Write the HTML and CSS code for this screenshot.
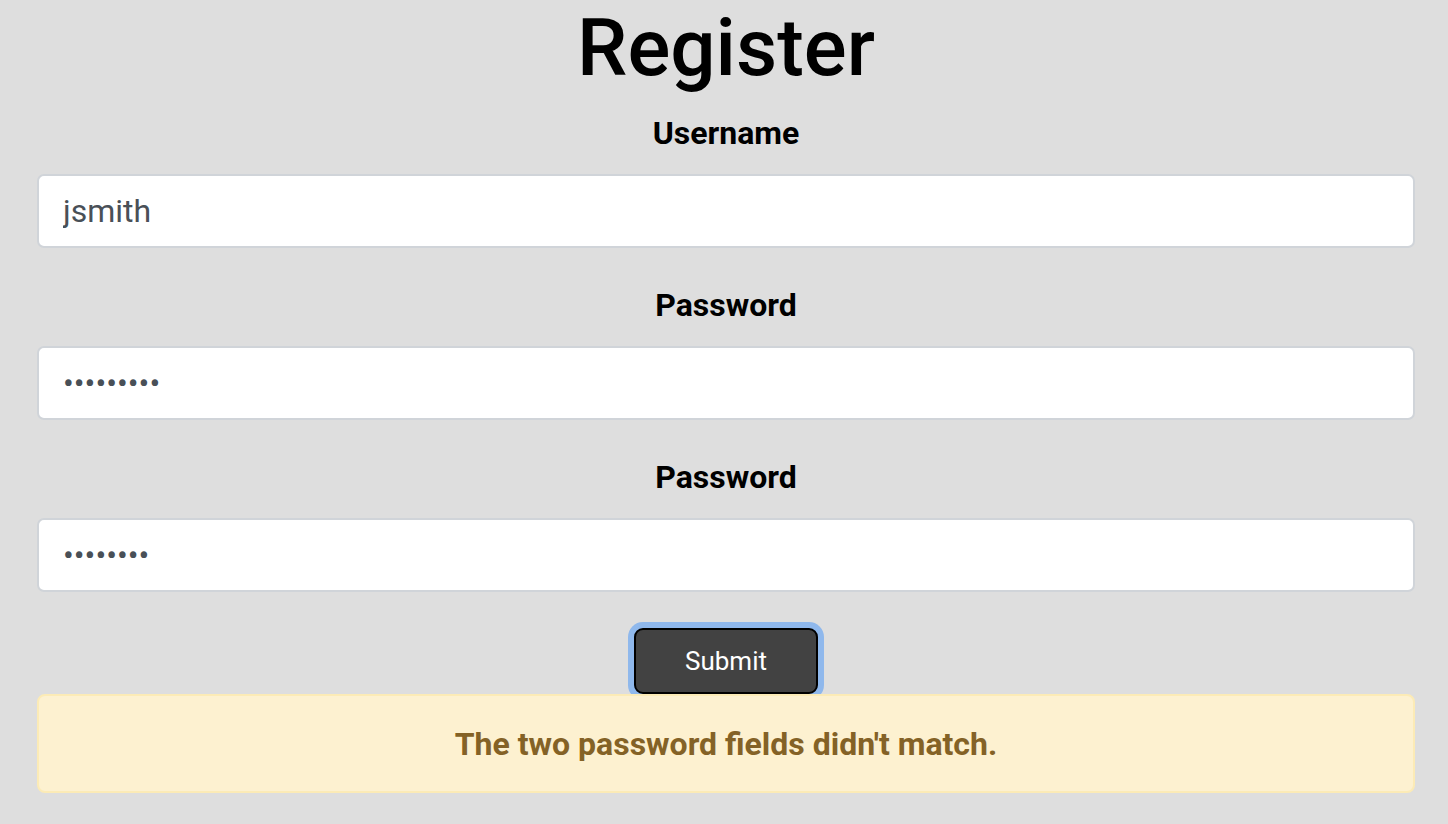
FILE: index.html
```html
<!DOCTYPE html>
<html lang="en">
<head>
<meta charset="utf-8">
<title>Register</title>
<link rel="stylesheet" href="styles.css">
</head>
<body>
<main class="page">
  <h1 class="title">Register</h1>
  <form class="form">
    <div class="field field-first">
      <label class="label" for="username">Username</label>
      <input class="input" id="username" type="text" value="jsmith">
    </div>
    <div class="field">
      <label class="label" for="password1">Password</label>
      <input class="input input-pw" id="password1" type="password" value="123456789">
    </div>
    <div class="field">
      <label class="label" for="password2">Password</label>
      <input class="input input-pw" id="password2" type="password" value="12345678">
    </div>
    <div class="actions">
      <button class="btn" type="button">Submit</button>
    </div>
    <div class="alert">The two password fields didn't match.</div>
  </form>
</main>
</body>
</html>
```

FILE: styles.css
```css
html, body {
  margin: 0;
  padding: 0;
  background: #dedede;
  font-family: Roboto, "Liberation Sans", sans-serif;
  color: #000;
}

.page {
  padding: 0 33px 0 37px;
}

.title {
  margin: 0;
  padding-top: 2px;
  text-align: center;
  font-size: 80px;
  font-weight: 500;
  line-height: 92px;
}

.form {
  display: flex;
  flex-direction: column;
}

.field {
  display: flex;
  flex-direction: column;
}

.label {
  display: block;
  text-align: center;
  font-size: 32px;
  font-weight: 700;
  line-height: 38px;
  margin-top: 38px;
  margin-bottom: 22px;
}

.field-first .label {
  margin-top: 20px;
}

.input {
  box-sizing: border-box;
  width: 100%;
  height: 74px;
  margin: 0;
  padding: 0 24px;
  border: 2px solid #d0d4d9;
  border-radius: 7px;
  background: #fff;
  font-family: Roboto, "Liberation Sans", sans-serif;
  font-size: 32px;
  color: #495057;
  outline: none;
}

.input-pw {
  font-size: 32px;
  letter-spacing: 0;
}

.actions {
  display: flex;
  justify-content: center;
  margin-top: 36px;
}

.btn {
  box-sizing: border-box;
  width: 184px;
  height: 66px;
  background: #424242;
  color: #fff;
  border: 2px solid #000;
  border-radius: 9px;
  font-family: Roboto, "Liberation Sans", sans-serif;
  font-size: 26px;
  box-shadow: 0 0 0 6px #8fb8ec;
  cursor: pointer;
}

.alert {
  box-sizing: border-box;
  height: 99px;
  display: flex;
  align-items: center;
  justify-content: center;
  background: #fdf1d0;
  border: 2px solid #fcebb6;
  border-radius: 8px;
  color: #846226;
  font-size: 32px;
  font-weight: 700;
}
```
